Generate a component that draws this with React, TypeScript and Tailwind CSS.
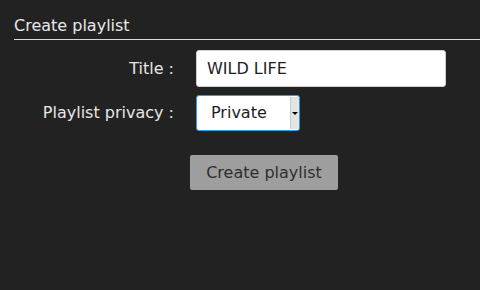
import React from "react";

export default function App() {
  return (
    <div
      className="w-[480px] h-[290px] bg-[#222222] text-[#e6e6e6] overflow-hidden"
      style={{ fontFamily: '"DejaVu Sans", sans-serif' }}
    >
      <div className="pl-[14px] pt-[16px]">
        <div className="text-[16px] leading-[20px] pb-[3px] border-b border-[#d8d8d8] text-[#e8e8e8]">
          Create playlist
        </div>
        <div className="mt-[10px] flex items-center">
          <label className="w-[160px] text-right text-[16px] text-[#e6e6e6]">Title :</label>
          <input
            className="ml-[22px] w-[250px] h-[37px] bg-white rounded-[3px] border border-[#cfcfcf] px-[10px] text-[16px] text-[#1e1e1e] outline-none"
            defaultValue="WILD LIFE"
            style={{ fontFamily: '"DejaVu Sans", sans-serif' }}
          />
        </div>
        <div className="mt-[8px] flex items-center">
          <label className="w-[160px] text-right text-[16px] text-[#e6e6e6]">Playlist privacy :</label>
          <div className="relative ml-[22px] w-[104px] h-[36px]">
            <select
              className="appearance-none w-full h-full bg-white rounded-[3px] border border-[#2f9de0] pl-[14px] text-[16px] text-[#1e1e1e] outline-none"
              style={{ fontFamily: '"DejaVu Sans", sans-serif' }}
              defaultValue="Private"
            >
              <option>Private</option>
              <option>Public</option>
            </select>
            <div className="pointer-events-none absolute right-[1px] top-[2px] bottom-[2px] w-[9px] bg-[#e4e4e4] border-l border-[#c8c8c8] flex items-center justify-center">
              <div className="w-0 h-0 border-l-[3px] border-r-[3px] border-t-[3px] border-l-transparent border-r-transparent border-t-black" />
            </div>
          </div>
        </div>
        <div className="mt-[24px] pl-[176px]">
          <button
            className="w-[148px] h-[35px] bg-[#9e9e9e] rounded-[2px] text-[16px] text-[#2e2e2e]"
            style={{ fontFamily: '"DejaVu Sans", sans-serif' }}
          >
            Create playlist
          </button>
        </div>
      </div>
    </div>
  );
}
